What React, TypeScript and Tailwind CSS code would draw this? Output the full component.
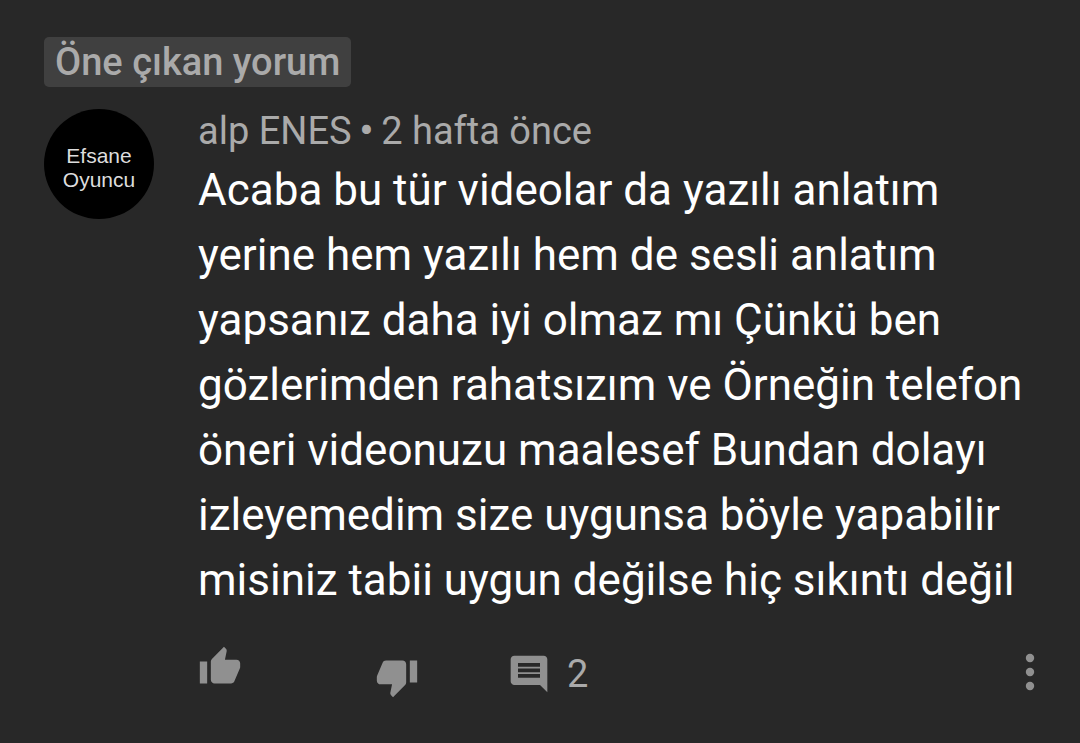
const lines = [
  "Acaba bu tür videolar da yazılı anlatım",
  "yerine hem yazılı hem de sesli anlatım",
  "yapsanız daha iyi olmaz mı Çünkü ben",
  "gözlerimden rahatsızım ve Örneğin telefon",
  "öneri videonuzu maalesef Bundan dolayı",
  "izleyemedim size uygunsa böyle yapabilir",
  "misiniz tabii uygun değilse hiç sıkıntı değil",
];

function Icon({ d }: { d: string }) {
  return (
    <svg viewBox="0 0 24 24" className="size-11" fill="currentColor" aria-hidden="true">
      <path d={d} />
    </svg>
  );
}

export default function App() {
  return (
    <main className="min-h-screen bg-[#282828] px-11 pt-[37px] pb-10 font-['Roboto',sans-serif] text-[#aaaaaa]">
      <span className="inline-flex h-[50px] items-center rounded-[5px] bg-[#404040] px-[11px] text-[38px] font-medium leading-none">
        Öne çıkan yorum
      </span>
      <article className="mt-4 flex gap-11">
        <div className="mt-[6px] flex size-[110px] shrink-0 flex-col items-center justify-center rounded-full bg-black pt-2 font-['Liberation_Sans',sans-serif] text-[21px] leading-[24px] text-[#dddddd]">
          <span>Efsane</span>
          <span>Oyuncu</span>
        </div>
        <div className="min-w-0 flex-1">
          <header className="flex gap-2 pt-[6px] text-[38px] leading-[44px]">
            <span>alp ENES</span>
            <span className="font-bold">•</span>
            <span>2 hafta önce</span>
          </header>
          <p className="mt-[5px] text-[44px] leading-[65px] text-white">
            {lines.map((line) => (
              <span key={line} className="block whitespace-nowrap">
                {line}
              </span>
            ))}
          </p>
          <footer className="mt-8 flex h-[54px] items-center text-[#909090]">
            <button type="button" aria-label="Beğen" className="self-start">
              <Icon d="M1 21h4V9H1v12zm22-11c0-1.1-.9-2-2-2h-6.31l.95-4.57.03-.32c0-.41-.17-.79-.44-1.06L14.17 1 7.59 7.59C7.22 7.95 7 8.45 7 9v10c0 1.1.9 2 2 2h9c.83 0 1.54-.5 1.84-1.22l3.02-7.05c.09-.23.14-.47.14-.73v-2z" />
            </button>
            <button type="button" aria-label="Beğenme" className="ml-[133px] self-end">
              <Icon d="M15 3H6c-.83 0-1.54.5-1.84 1.22l-3.02 7.05c-.09.23-.14.47-.14.73v2c0 1.1.9 2 2 2h6.31l-.95 4.57-.03.32c0 .41.17.79.44 1.06L9.83 23l6.59-6.59c.36-.36.58-.86.58-1.41V5c0-1.1-.9-2-2-2zm4 0v12h4V3h-4z" />
            </button>
            <button type="button" aria-label="2 yanıt" className="mt-1 ml-[88px] flex items-center gap-4">
              <Icon d="M21.99 4c0-1.1-.89-2-1.99-2H4c-1.1 0-2 .9-2 2v12c0 1.1.9 2 2 2h14l4 4-.01-18zM18 14H6v-2h12v2zm0-3H6V9h12v2zm0-3H6V6h12v2z" />
              <span className="text-[38px] leading-[44px] text-[#aaaaaa]">2</span>
            </button>
            <button type="button" aria-label="Diğer seçenekler" className="ml-auto">
              <svg viewBox="0 0 12 44" className="h-11 w-3" fill="currentColor" aria-hidden="true">
                <circle cx="6" cy="8" r="4.2" />
                <circle cx="6" cy="22" r="4.2" />
                <circle cx="6" cy="36" r="4.2" />
              </svg>
            </button>
          </footer>
        </div>
      </article>
    </main>
  );
}
